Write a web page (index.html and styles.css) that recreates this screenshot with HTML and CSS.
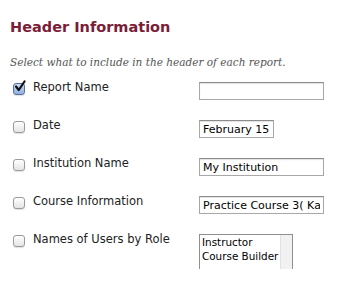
FILE: index.html
```html
<!DOCTYPE html>
<html>
<head>
<meta charset="utf-8">
<link rel="stylesheet" href="styles.css">
</head>
<body>
<section class="panel">
  <h2 class="title">Header Information</h2>
  <p class="intro">Select what to include in the header of each report.</p>
  <div class="rows">
    <div class="row">
      <label class="opt">
        <span class="box checked"><svg width="14" height="14" viewBox="0 0 14 14"><path d="M3 6.5 L5.8 10 L11.5 1.5" fill="none" stroke="#111" stroke-width="2.2" stroke-linecap="round" stroke-linejoin="round"/></svg></span>
        <span class="txt">Report Name</span>
      </label>
      <input class="field wide" type="text" value="">
    </div>
    <div class="row">
      <label class="opt"><span class="box"></span><span class="txt">Date</span></label>
      <input class="field short" type="text" value="February 15, 2013">
    </div>
    <div class="row">
      <label class="opt"><span class="box"></span><span class="txt">Institution Name</span></label>
      <input class="field wide" type="text" value="My Institution">
    </div>
    <div class="row">
      <label class="opt"><span class="box"></span><span class="txt">Course Information</span></label>
      <input class="field wide" type="text" value="Practice Course 3( Katherine )">
    </div>
    <div class="row">
      <label class="opt"><span class="box"></span><span class="txt">Names of Users by Role</span></label>
      <div class="listbox">
        <ul class="items">
          <li>Instructor</li>
          <li>Course Builder</li>
        </ul>
        <div class="track"></div>
      </div>
    </div>
  </div>
</section>
</body>
</html>
```
FILE: styles.css
```css
html, body {
  margin: 0;
  padding: 0;
  background: #fff;
}
.panel {
  padding: 0 0 0 10px;
  font-family: "DejaVu Sans", sans-serif;
}
.title {
  margin: 0;
  padding-top: 17px;
  font-size: 14.5px;
  line-height: 20px;
  font-weight: bold;
  color: #7b1d36;
}
.intro {
  margin: 0;
  padding-top: 18px;
  font-family: "DejaVu Serif", serif;
  font-style: italic;
  font-size: 10.5px;
  line-height: 14px;
  color: #555;
}
.rows {
  padding-top: 10px;
  display: flex;
  flex-direction: column;
}
.row {
  display: flex;
  align-items: flex-start;
  height: 38px;
}
.opt {
  width: 189px;
  display: flex;
  align-items: flex-start;
  padding-left: 3px;
  box-sizing: border-box;
}
.box {
  width: 10px;
  height: 10px;
  margin-top: 4px;
  margin-right: 8px;
  border: 1px solid #9a9a9a;
  border-radius: 3px;
  background: linear-gradient(#ffffff, #e4e4e4);
  box-shadow: 0 1px 1px rgba(0,0,0,0.12);
  position: relative;
  flex: none;
}
.box.checked {
  background: linear-gradient(#c9dbf5, #8fb0e3);
  border-color: #5a6f99;
}
.box svg {
  position: absolute;
  left: -1px;
  top: -4px;
}
.txt {
  font-size: 11.5px;
  line-height: 16px;
  color: #222;
}
.field {
  margin: 3px 0 0 0;
  height: 18px;
  box-sizing: border-box;
  border: 1px solid #a8a8a8;
  border-top-color: #8c8c8c;
  box-shadow: inset 0 1px 1px rgba(0,0,0,0.12);
  padding: 0 3px;
  font-family: "DejaVu Sans", sans-serif;
  font-size: 11px;
  color: #000;
  background: #fff;
  outline: none;
}
.wide { width: 125px; }
.short { width: 75px; }
.listbox {
  margin-top: 3px;
  width: 94px;
  height: 56px;
  box-sizing: border-box;
  border: 1px solid #8f8f8f;
  display: flex;
  background: #fff;
}
.items {
  list-style: none;
  margin: 0;
  padding: 0 0 0 2px;
  flex: 1;
  min-width: 0;
  overflow: hidden;
  white-space: nowrap;
  font-size: 10.4px;
  line-height: 14px;
  color: #000;
}
.track {
  width: 11px;
  flex: none;
  background: #f1f1f1;
  border-left: 1px solid #e2e2e2;
}
```
